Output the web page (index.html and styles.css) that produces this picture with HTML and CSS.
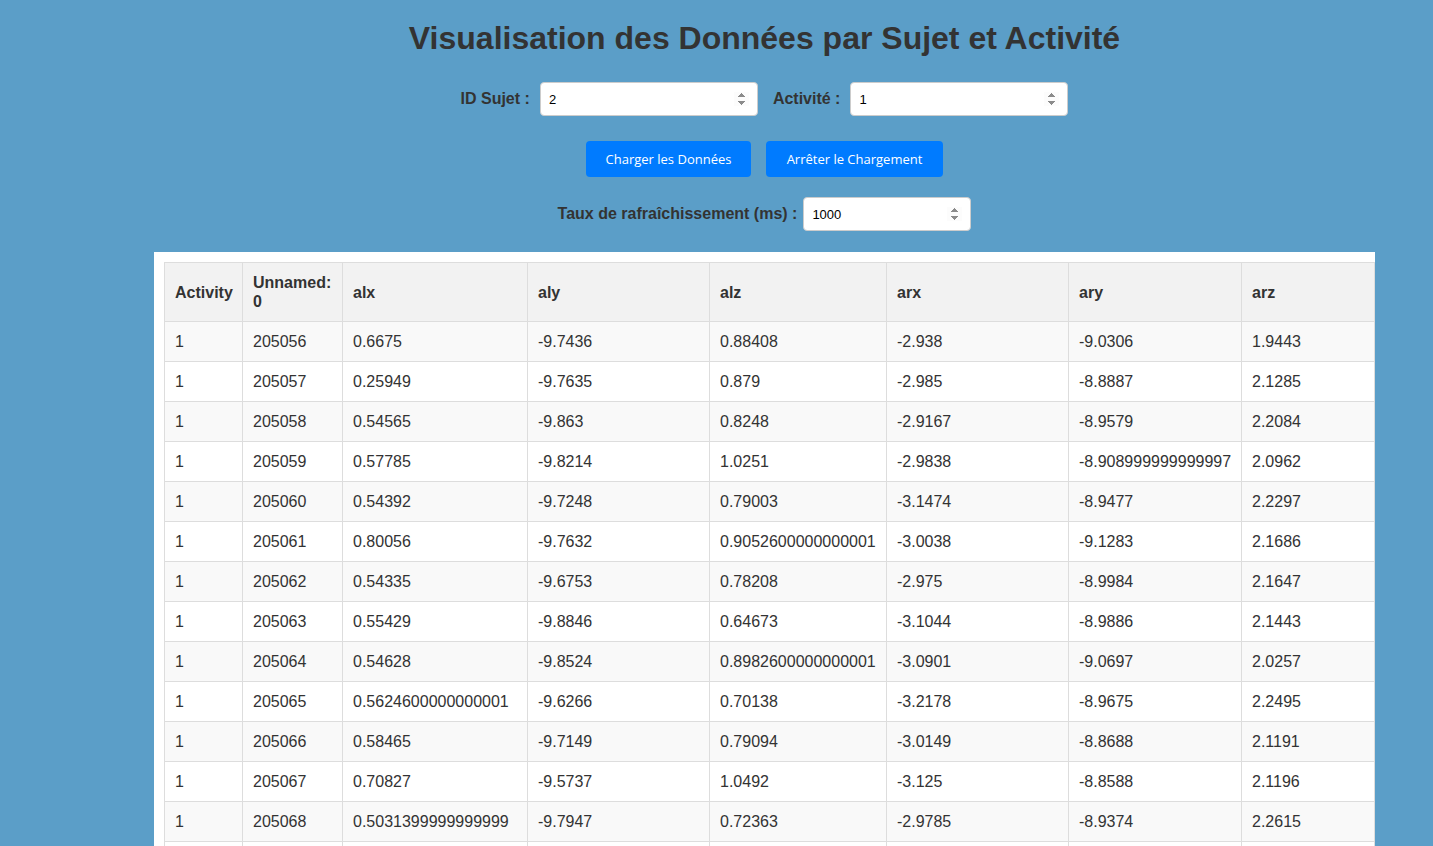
FILE: index.html
```html
<!DOCTYPE html>
<html lang="fr">
<head>
<meta charset="utf-8">
<title>Visualisation des Données</title>
<link rel="stylesheet" href="styles.css">
</head>
<body>
<div class="page">
  <h1 class="title">Visualisation des Données par Sujet et Activité</h1>
  <div class="form-row">
    <label class="label" for="sujet">ID Sujet :</label>
    <input class="field field-wide" id="sujet" type="number" value="2">
    <label class="label label-gap" for="activite">Activité :</label>
    <input class="field field-wide" id="activite" type="number" value="1">
  </div>
  <div class="button-row">
    <button class="btn btn-load">Charger les Données</button>
    <button class="btn btn-stop">Arrêter le Chargement</button>
  </div>
  <div class="form-row rate-row">
    <label class="label" for="rate">Taux de rafraîchissement (ms) :</label>
    <input class="field field-rate" id="rate" type="number" value="1000">
  </div>
  <div class="table-box">
    <table class="data">
      <colgroup>
        <col style="width:78px"><col style="width:100px"><col style="width:185px"><col style="width:182px">
        <col style="width:177px"><col style="width:182px"><col style="width:173px"><col style="width:133px">
      </colgroup>
      <thead>
        <tr><th>Activity</th><th>Unnamed:<br>0</th><th>alx</th><th>aly</th><th>alz</th><th>arx</th><th>ary</th><th>arz</th></tr>
      </thead>
      <tbody>
        <tr><td>1</td><td>205056</td><td>0.6675</td><td>-9.7436</td><td>0.88408</td><td>-2.938</td><td>-9.0306</td><td>1.9443</td></tr>
        <tr><td>1</td><td>205057</td><td>0.25949</td><td>-9.7635</td><td>0.879</td><td>-2.985</td><td>-8.8887</td><td>2.1285</td></tr>
        <tr><td>1</td><td>205058</td><td>0.54565</td><td>-9.863</td><td>0.8248</td><td>-2.9167</td><td>-8.9579</td><td>2.2084</td></tr>
        <tr><td>1</td><td>205059</td><td>0.57785</td><td>-9.8214</td><td>1.0251</td><td>-2.9838</td><td>-8.908999999999997</td><td>2.0962</td></tr>
        <tr><td>1</td><td>205060</td><td>0.54392</td><td>-9.7248</td><td>0.79003</td><td>-3.1474</td><td>-8.9477</td><td>2.2297</td></tr>
        <tr><td>1</td><td>205061</td><td>0.80056</td><td>-9.7632</td><td>0.9052600000000001</td><td>-3.0038</td><td>-9.1283</td><td>2.1686</td></tr>
        <tr><td>1</td><td>205062</td><td>0.54335</td><td>-9.6753</td><td>0.78208</td><td>-2.975</td><td>-8.9984</td><td>2.1647</td></tr>
        <tr><td>1</td><td>205063</td><td>0.55429</td><td>-9.8846</td><td>0.64673</td><td>-3.1044</td><td>-8.9886</td><td>2.1443</td></tr>
        <tr><td>1</td><td>205064</td><td>0.54628</td><td>-9.8524</td><td>0.8982600000000001</td><td>-3.0901</td><td>-9.0697</td><td>2.0257</td></tr>
        <tr><td>1</td><td>205065</td><td>0.5624600000000001</td><td>-9.6266</td><td>0.70138</td><td>-3.2178</td><td>-8.9675</td><td>2.2495</td></tr>
        <tr><td>1</td><td>205066</td><td>0.58465</td><td>-9.7149</td><td>0.79094</td><td>-3.0149</td><td>-8.8688</td><td>2.1191</td></tr>
        <tr><td>1</td><td>205067</td><td>0.70827</td><td>-9.5737</td><td>1.0492</td><td>-3.125</td><td>-8.8588</td><td>2.1196</td></tr>
        <tr><td>1</td><td>205068</td><td>0.5031399999999999</td><td>-9.7947</td><td>0.72363</td><td>-2.9785</td><td>-8.9374</td><td>2.2615</td></tr>
        <tr><td>1</td><td>205069</td><td>0.61412</td><td>-9.7501</td><td>0.80312</td><td>-3.0512</td><td>-8.9012</td><td>2.1803</td></tr>
      </tbody>
    </table>
  </div>
</div>
</body>
</html>
```

FILE: styles.css
```css
html, body {
  margin: 0;
  padding: 0;
}
body {
  background: #5b9ec8;
  font-family: "Liberation Sans", Arial, sans-serif;
  color: #333;
  overflow: hidden;
}
.page {
  margin-left: 96.5px;
  width: 1336px;
  display: flex;
  flex-direction: column;
  align-items: center;
}
.title {
  font-size: 32px;
  font-weight: bold;
  color: #333;
  margin: 20px 0 0;
  line-height: 37px;
}
.form-row {
  display: flex;
  align-items: center;
  margin-top: 25px;
}
.label {
  font-size: 16px;
  font-weight: bold;
  color: #333;
  margin-right: 10px;
}
.label-gap {
  margin-left: 15px;
}
.field {
  box-sizing: border-box;
  height: 34px;
  border: 1px solid #ccc;
  border-radius: 4px;
  padding: 0 8px 0 8px;
  font-family: "Liberation Sans", Arial, sans-serif;
  font-size: 13px;
  color: #000;
  background: #fff;
}
.field::-webkit-inner-spin-button {
  opacity: 1;
}
.field-wide {
  width: 218px;
}
.field-rate {
  width: 168px;
}
.rate-row {
  margin-top: 20px;
}
.rate-row .label {
  margin-right: 6px;
}
.button-row {
  display: flex;
  gap: 15px;
  margin-top: 25px;
}
.btn {
  height: 36px;
  border: none;
  border-radius: 4px;
  background: #007bff;
  color: #fff;
  font-family: "Open Sans", "Noto Sans", sans-serif;
  font-size: 13px;
  padding: 0;
  white-space: nowrap;
  cursor: pointer;
}
.btn-load {
  width: 165px;
}
.btn-stop {
  width: 177px;
}
.table-box {
  margin-top: 21px;
  width: 1211px;
  padding: 10px 0 10px 10px;
  background: #fff;
}
.data {
  width: 1210px;
  border-collapse: collapse;
  table-layout: fixed;
  font-size: 16px;
}
.data th,
.data td {
  border: 1px solid #ddd;
  padding: 10px;
  line-height: 19px;
  text-align: left;
  white-space: nowrap;
  color: #333;
}
.data th {
  background: #f2f2f2;
  font-weight: bold;
  white-space: normal;
}
.data tbody tr:nth-child(odd) {
  background: #f9f9f9;
}
.data tbody tr:nth-child(even) {
  background: #fff;
}
```
